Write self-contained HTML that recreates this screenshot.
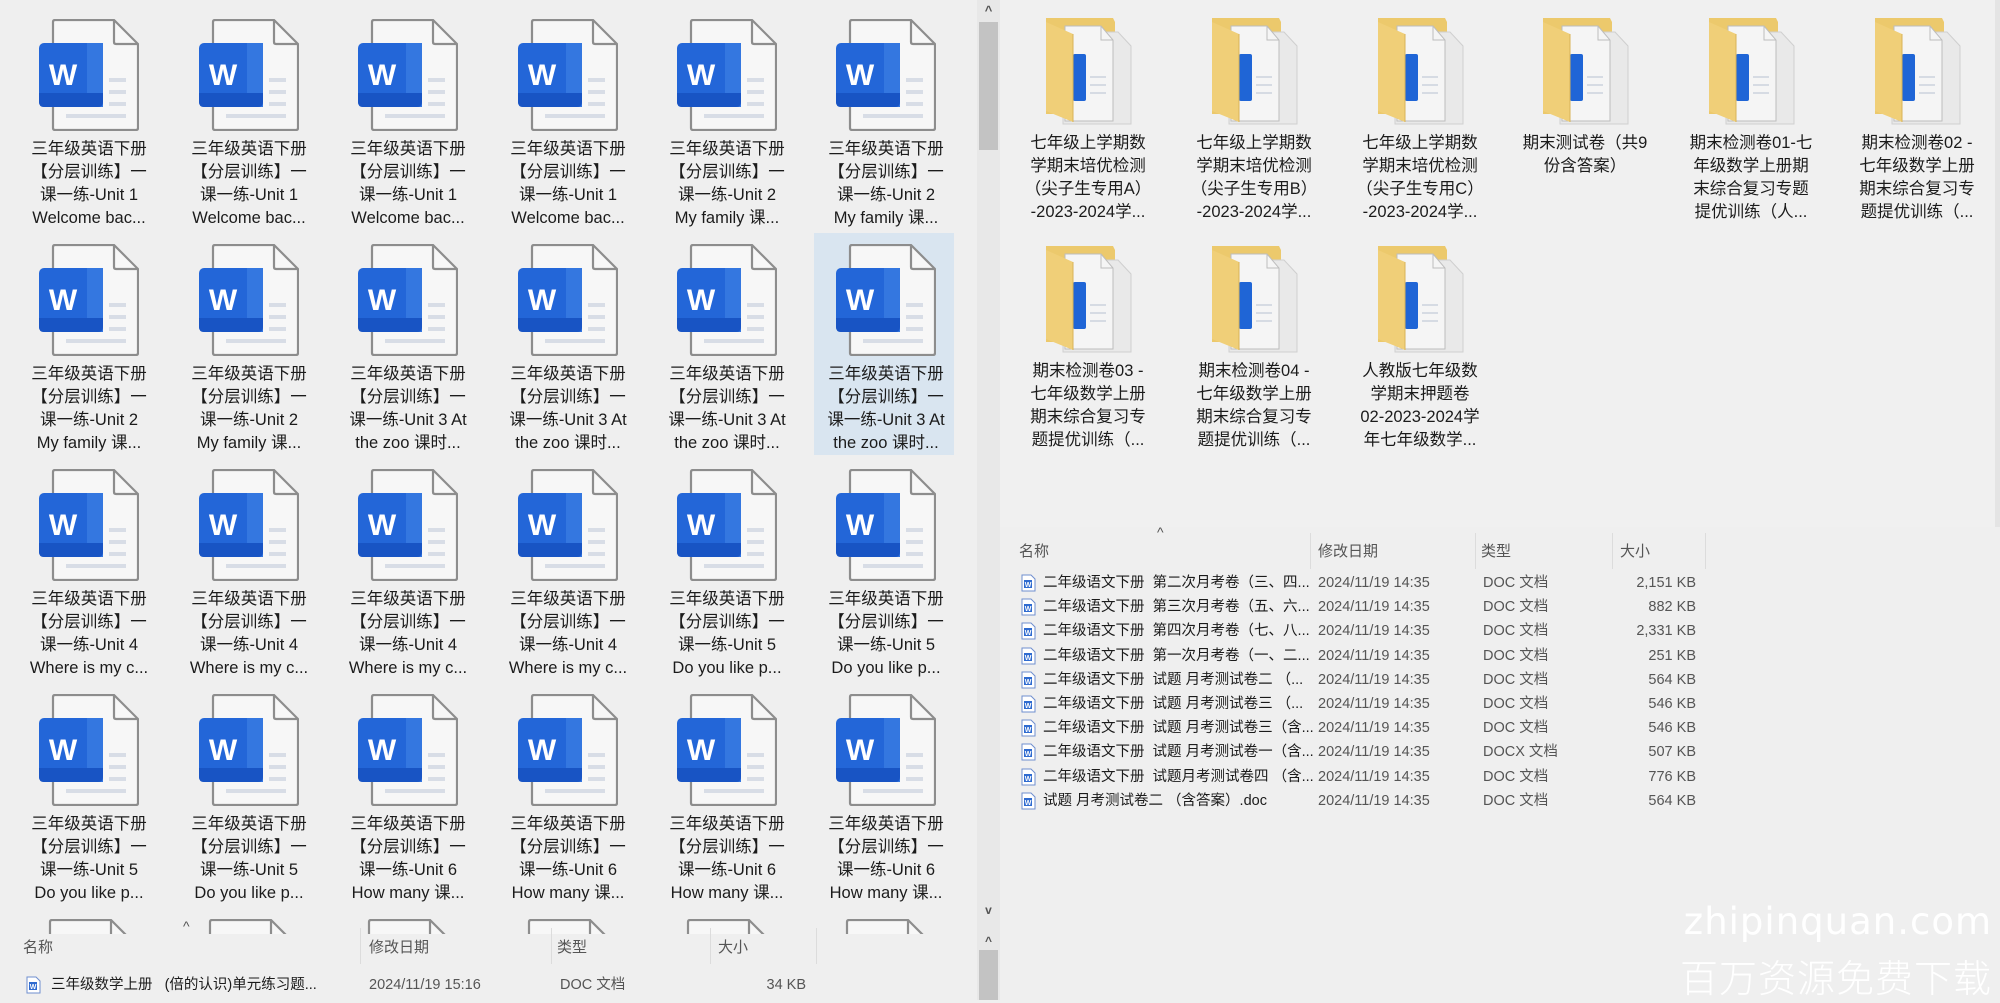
<!DOCTYPE html>
<html><head><meta charset="utf-8">
<style>
*{margin:0;padding:0;box-sizing:border-box}
html,body{width:2000px;height:1000px;overflow:hidden;background:#efefef;font-family:"Liberation Sans","Noto Sans CJK SC",sans-serif;color:#1b1b1b}
.it{position:absolute;width:150px;text-align:center}
.it svg{display:block;margin:0 auto}
.t{font-size:16.5px;line-height:23px;white-space:nowrap;margin-top:7px}
.sel{position:absolute;left:814px;top:233px;width:140px;height:222px;background:#d9e5f0}
.hdr{position:absolute;font-size:15px;color:#555}
.sep{position:absolute;width:1px;background:#dcdcdc}
.row{position:absolute;top:0;font-size:14.5px;line-height:18px;height:18px;color:#1b1b1b;white-space:nowrap}
.g{color:#555}
.wm{position:absolute;right:8px;color:#fff;text-align:right;white-space:nowrap}
</style></head><body>
<svg width="0" height="0" style="position:absolute">
<defs>
<symbol id="doc" viewBox="0 0 100 112">
<path d="M14 3 Q14 1 16 1 L75 1 L99 25 L99 109 Q99 111 97 111 L16 111 Q14 111 14 109 Z" fill="#f7f7f7" stroke="#8d8d8d" stroke-width="2.2"/>
<path d="M75 1 L75 23 Q75 25 77 25 L99 25" fill="none" stroke="#8d8d8d" stroke-width="2.2"/>
<rect x="70" y="59" width="17" height="4" fill="#d8dde6"/>
<rect x="70" y="71" width="17" height="4" fill="#d8dde6"/>
<rect x="70" y="83" width="17" height="4" fill="#d8dde6"/>
<rect x="27" y="95" width="60" height="4" fill="#d8dde6"/>
<rect x="0" y="24" width="64" height="64" rx="5" fill="#2366d8"/>
<rect x="48" y="24" width="16" height="64" fill="#3477e0"/>
<path d="M0 74 L64 74 L64 83 Q64 88 59 88 L5 88 Q0 88 0 83 Z" fill="#1854c4"/>
<text x="24" y="66" font-family="Liberation Sans,sans-serif" font-weight="bold" font-size="30" fill="#fff" text-anchor="middle">W</text>
</symbol>
<symbol id="fold" viewBox="0 0 90 115">
<path d="M3 4 L70 4 L72 8 L72 100 L3 100 Z" fill="#ecc96c"/>
<path d="M20 18 L75 18 L88 32 L88 110 L20 110 Z" fill="#e9e9e9" stroke="#cfcfcf"/>
<path d="M22 12 L58 12 L70 26 L70 107 L22 107 Z" fill="#f5f5f5" stroke="#bdbdbd"/>
<path d="M58 12 L58 26 L70 26" fill="none" stroke="#bdbdbd"/>
<rect x="30" y="40" width="13" height="47" rx="2" fill="#1f65d6"/>
<rect x="47" y="62" width="16" height="2" fill="#d6dbe3"/><rect x="47" y="70" width="16" height="2" fill="#d6dbe3"/><rect x="47" y="78" width="16" height="2" fill="#d6dbe3"/>
<path d="M3 8 L30 20 L30 108 L3 97 Z" fill="#f0cf78"/>
<path d="M30 20 L30 108" stroke="#d9b357" stroke-width="1"/>
</symbol>
<symbol id="sdoc" viewBox="0 0 16 18">
<path d="M2 1 L11 1 L15 5 L15 17 L2 17 Z" fill="#fff" stroke="#6f8fcf" stroke-width="1"/>
<rect x="4" y="6" width="8" height="8" fill="#2f6bd0"/>
<text x="8" y="13" font-size="7" font-family="Liberation Sans,sans-serif" fill="#fff" text-anchor="middle" font-weight="bold">W</text>
</symbol>
</defs></svg>

<div class="sel"></div>

<div class="it" style="left:14px;top:19px"><svg width="100" height="112"><use href="#doc"/></svg><div class="t">三年级英语下册<br>【分层训练】一<br>课一练-Unit 1<br>Welcome bac...</div></div>
<div class="it" style="left:174px;top:19px"><svg width="100" height="112"><use href="#doc"/></svg><div class="t">三年级英语下册<br>【分层训练】一<br>课一练-Unit 1<br>Welcome bac...</div></div>
<div class="it" style="left:333px;top:19px"><svg width="100" height="112"><use href="#doc"/></svg><div class="t">三年级英语下册<br>【分层训练】一<br>课一练-Unit 1<br>Welcome bac...</div></div>
<div class="it" style="left:493px;top:19px"><svg width="100" height="112"><use href="#doc"/></svg><div class="t">三年级英语下册<br>【分层训练】一<br>课一练-Unit 1<br>Welcome bac...</div></div>
<div class="it" style="left:652px;top:19px"><svg width="100" height="112"><use href="#doc"/></svg><div class="t">三年级英语下册<br>【分层训练】一<br>课一练-Unit 2<br>My family 课...</div></div>
<div class="it" style="left:811px;top:19px"><svg width="100" height="112"><use href="#doc"/></svg><div class="t">三年级英语下册<br>【分层训练】一<br>课一练-Unit 2<br>My family 课...</div></div>

<div class="it" style="left:14px;top:244px"><svg width="100" height="112"><use href="#doc"/></svg><div class="t">三年级英语下册<br>【分层训练】一<br>课一练-Unit 2<br>My family 课...</div></div>
<div class="it" style="left:174px;top:244px"><svg width="100" height="112"><use href="#doc"/></svg><div class="t">三年级英语下册<br>【分层训练】一<br>课一练-Unit 2<br>My family 课...</div></div>
<div class="it" style="left:333px;top:244px"><svg width="100" height="112"><use href="#doc"/></svg><div class="t">三年级英语下册<br>【分层训练】一<br>课一练-Unit 3 At<br>the zoo 课时...</div></div>
<div class="it" style="left:493px;top:244px"><svg width="100" height="112"><use href="#doc"/></svg><div class="t">三年级英语下册<br>【分层训练】一<br>课一练-Unit 3 At<br>the zoo 课时...</div></div>
<div class="it" style="left:652px;top:244px"><svg width="100" height="112"><use href="#doc"/></svg><div class="t">三年级英语下册<br>【分层训练】一<br>课一练-Unit 3 At<br>the zoo 课时...</div></div>
<div class="it" style="left:811px;top:244px"><svg width="100" height="112"><use href="#doc"/></svg><div class="t">三年级英语下册<br>【分层训练】一<br>课一练-Unit 3 At<br>the zoo 课时...</div></div>

<div class="it" style="left:14px;top:469px"><svg width="100" height="112"><use href="#doc"/></svg><div class="t">三年级英语下册<br>【分层训练】一<br>课一练-Unit 4<br>Where is my c...</div></div>
<div class="it" style="left:174px;top:469px"><svg width="100" height="112"><use href="#doc"/></svg><div class="t">三年级英语下册<br>【分层训练】一<br>课一练-Unit 4<br>Where is my c...</div></div>
<div class="it" style="left:333px;top:469px"><svg width="100" height="112"><use href="#doc"/></svg><div class="t">三年级英语下册<br>【分层训练】一<br>课一练-Unit 4<br>Where is my c...</div></div>
<div class="it" style="left:493px;top:469px"><svg width="100" height="112"><use href="#doc"/></svg><div class="t">三年级英语下册<br>【分层训练】一<br>课一练-Unit 4<br>Where is my c...</div></div>
<div class="it" style="left:652px;top:469px"><svg width="100" height="112"><use href="#doc"/></svg><div class="t">三年级英语下册<br>【分层训练】一<br>课一练-Unit 5<br>Do you like p...</div></div>
<div class="it" style="left:811px;top:469px"><svg width="100" height="112"><use href="#doc"/></svg><div class="t">三年级英语下册<br>【分层训练】一<br>课一练-Unit 5<br>Do you like p...</div></div>

<div class="it" style="left:14px;top:694px"><svg width="100" height="112"><use href="#doc"/></svg><div class="t">三年级英语下册<br>【分层训练】一<br>课一练-Unit 5<br>Do you like p...</div></div>
<div class="it" style="left:174px;top:694px"><svg width="100" height="112"><use href="#doc"/></svg><div class="t">三年级英语下册<br>【分层训练】一<br>课一练-Unit 5<br>Do you like p...</div></div>
<div class="it" style="left:333px;top:694px"><svg width="100" height="112"><use href="#doc"/></svg><div class="t">三年级英语下册<br>【分层训练】一<br>课一练-Unit 6<br>How many 课...</div></div>
<div class="it" style="left:493px;top:694px"><svg width="100" height="112"><use href="#doc"/></svg><div class="t">三年级英语下册<br>【分层训练】一<br>课一练-Unit 6<br>How many 课...</div></div>
<div class="it" style="left:652px;top:694px"><svg width="100" height="112"><use href="#doc"/></svg><div class="t">三年级英语下册<br>【分层训练】一<br>课一练-Unit 6<br>How many 课...</div></div>
<div class="it" style="left:811px;top:694px"><svg width="100" height="112"><use href="#doc"/></svg><div class="t">三年级英语下册<br>【分层训练】一<br>课一练-Unit 6<br>How many 课...</div></div>

<div style="position:absolute;left:0;top:919px;width:977px;height:15px;overflow:hidden">
<svg style="position:absolute;left:36px;top:0" width="100" height="112"><use href="#doc"/></svg>
<svg style="position:absolute;left:196px;top:0" width="100" height="112"><use href="#doc"/></svg>
<svg style="position:absolute;left:355px;top:0" width="100" height="112"><use href="#doc"/></svg>
<svg style="position:absolute;left:515px;top:0" width="100" height="112"><use href="#doc"/></svg>
<svg style="position:absolute;left:674px;top:0" width="100" height="112"><use href="#doc"/></svg>
<svg style="position:absolute;left:833px;top:0" width="100" height="112"><use href="#doc"/></svg>
</div>

<div style="position:absolute;left:0;top:934px;width:977px;height:66px;background:#efefef"></div>
<div class="hdr" style="left:183px;top:918px;font-size:14px">^</div>
<div class="hdr" style="left:23px;top:936px">名称</div>
<div class="hdr" style="left:369px;top:936px">修改日期</div>
<div class="hdr" style="left:557px;top:936px">类型</div>
<div class="hdr" style="left:718px;top:936px">大小</div>
<div class="sep" style="left:360px;top:928px;height:36px"></div>
<div class="sep" style="left:551px;top:928px;height:36px"></div>
<div class="sep" style="left:710px;top:928px;height:36px"></div>
<div class="sep" style="left:816px;top:928px;height:36px"></div>
<div style="position:absolute;left:25px;top:976px;width:800px;height:20px">
<svg style="position:absolute;left:0;top:0" width="16" height="18"><use href="#sdoc"/></svg>
<span class="row" style="left:26px">三年级数学上册&nbsp;&nbsp;&nbsp;(倍的认识)单元练习题...</span>
<span class="row g" style="left:344px">2024/11/19 15:16</span>
<span class="row g" style="left:535px">DOC 文档</span>
<span class="row g" style="left:735px;width:46px;text-align:right">34 KB</span>
</div>

<div style="position:absolute;left:977px;top:0;width:23px;height:1000px;background:#e8e8e8"></div>
<div style="position:absolute;left:979px;top:22px;width:19px;height:128px;background:#c3c3c3"></div>
<div style="position:absolute;left:977px;top:3px;width:23px;text-align:center;font-size:13px;color:#555;font-weight:bold">^</div>
<div style="position:absolute;left:977px;top:903px;width:23px;text-align:center;font-size:12px;color:#555;font-weight:bold">v</div>
<div style="position:absolute;left:977px;top:934px;width:23px;text-align:center;font-size:12px;color:#555;font-weight:bold">^</div>
<div style="position:absolute;left:979px;top:950px;width:19px;height:50px;background:#c3c3c3"></div>

<div style="position:absolute;left:1000px;top:0;width:1000px;height:527px;background:#f0f0f0"></div>
<div style="position:absolute;left:1995px;top:0;width:5px;height:527px;background:#e4e4e4"></div>

<div class="it" style="left:1013px;top:14px"><svg width="90" height="115"><use href="#fold"/></svg><div class="t" style="margin-top:3px">七年级上学期数<br>学期末培优检测<br>（尖子生专用A）<br>-2023-2024学...</div></div>
<div class="it" style="left:1179px;top:14px"><svg width="90" height="115"><use href="#fold"/></svg><div class="t" style="margin-top:3px">七年级上学期数<br>学期末培优检测<br>（尖子生专用B）<br>-2023-2024学...</div></div>
<div class="it" style="left:1345px;top:14px"><svg width="90" height="115"><use href="#fold"/></svg><div class="t" style="margin-top:3px">七年级上学期数<br>学期末培优检测<br>（尖子生专用C）<br>-2023-2024学...</div></div>
<div class="it" style="left:1510px;top:14px"><svg width="90" height="115"><use href="#fold"/></svg><div class="t" style="margin-top:3px">期末测试卷（共9<br>份含答案）</div></div>
<div class="it" style="left:1676px;top:14px"><svg width="90" height="115"><use href="#fold"/></svg><div class="t" style="margin-top:3px">期末检测卷01-七<br>年级数学上册期<br>末综合复习专题<br>提优训练（人...</div></div>
<div class="it" style="left:1842px;top:14px"><svg width="90" height="115"><use href="#fold"/></svg><div class="t" style="margin-top:3px">期末检测卷02 -<br>七年级数学上册<br>期末综合复习专<br>题提优训练（...</div></div>

<div class="it" style="left:1013px;top:242px"><svg width="90" height="115"><use href="#fold"/></svg><div class="t" style="margin-top:3px">期末检测卷03 -<br>七年级数学上册<br>期末综合复习专<br>题提优训练（...</div></div>
<div class="it" style="left:1179px;top:242px"><svg width="90" height="115"><use href="#fold"/></svg><div class="t" style="margin-top:3px">期末检测卷04 -<br>七年级数学上册<br>期末综合复习专<br>题提优训练（...</div></div>
<div class="it" style="left:1345px;top:242px"><svg width="90" height="115"><use href="#fold"/></svg><div class="t" style="margin-top:3px">人教版七年级数<br>学期末押题卷<br>02-2023-2024学<br>年七年级数学...</div></div>

<div class="hdr" style="left:1157px;top:524px;font-size:14px">^</div>
<div class="hdr" style="left:1019px;top:540px">名称</div>
<div class="hdr" style="left:1318px;top:540px">修改日期</div>
<div class="hdr" style="left:1481px;top:540px">类型</div>
<div class="hdr" style="left:1620px;top:540px">大小</div>
<div class="sep" style="left:1310px;top:533px;height:36px"></div>
<div class="sep" style="left:1475px;top:533px;height:36px"></div>
<div class="sep" style="left:1612px;top:533px;height:36px"></div>
<div class="sep" style="left:1705px;top:533px;height:36px"></div>

<div style="position:absolute;left:1020px;top:574px">
<div style="position:relative;height:24.2px;width:700px"><svg style="position:absolute;left:0;top:0" width="16" height="18"><use href="#sdoc"/></svg><span class="row" style="left:23px">二年级语文下册&nbsp;&nbsp;第二次月考卷（三、四...</span><span class="row g" style="left:298px">2024/11/19 14:35</span><span class="row g" style="left:463px">DOC 文档</span><span class="row g" style="left:596px;width:80px;text-align:right">2,151 KB</span></div>
<div style="position:relative;height:24.2px;width:700px"><svg style="position:absolute;left:0;top:0" width="16" height="18"><use href="#sdoc"/></svg><span class="row" style="left:23px">二年级语文下册&nbsp;&nbsp;第三次月考卷（五、六...</span><span class="row g" style="left:298px">2024/11/19 14:35</span><span class="row g" style="left:463px">DOC 文档</span><span class="row g" style="left:596px;width:80px;text-align:right">882 KB</span></div>
<div style="position:relative;height:24.2px;width:700px"><svg style="position:absolute;left:0;top:0" width="16" height="18"><use href="#sdoc"/></svg><span class="row" style="left:23px">二年级语文下册&nbsp;&nbsp;第四次月考卷（七、八...</span><span class="row g" style="left:298px">2024/11/19 14:35</span><span class="row g" style="left:463px">DOC 文档</span><span class="row g" style="left:596px;width:80px;text-align:right">2,331 KB</span></div>
<div style="position:relative;height:24.2px;width:700px"><svg style="position:absolute;left:0;top:0" width="16" height="18"><use href="#sdoc"/></svg><span class="row" style="left:23px">二年级语文下册&nbsp;&nbsp;第一次月考卷（一、二...</span><span class="row g" style="left:298px">2024/11/19 14:35</span><span class="row g" style="left:463px">DOC 文档</span><span class="row g" style="left:596px;width:80px;text-align:right">251 KB</span></div>
<div style="position:relative;height:24.2px;width:700px"><svg style="position:absolute;left:0;top:0" width="16" height="18"><use href="#sdoc"/></svg><span class="row" style="left:23px">二年级语文下册&nbsp;&nbsp;试题 月考测试卷二 （...</span><span class="row g" style="left:298px">2024/11/19 14:35</span><span class="row g" style="left:463px">DOC 文档</span><span class="row g" style="left:596px;width:80px;text-align:right">564 KB</span></div>
<div style="position:relative;height:24.2px;width:700px"><svg style="position:absolute;left:0;top:0" width="16" height="18"><use href="#sdoc"/></svg><span class="row" style="left:23px">二年级语文下册&nbsp;&nbsp;试题 月考测试卷三 （...</span><span class="row g" style="left:298px">2024/11/19 14:35</span><span class="row g" style="left:463px">DOC 文档</span><span class="row g" style="left:596px;width:80px;text-align:right">546 KB</span></div>
<div style="position:relative;height:24.2px;width:700px"><svg style="position:absolute;left:0;top:0" width="16" height="18"><use href="#sdoc"/></svg><span class="row" style="left:23px">二年级语文下册&nbsp;&nbsp;试题 月考测试卷三（含...</span><span class="row g" style="left:298px">2024/11/19 14:35</span><span class="row g" style="left:463px">DOC 文档</span><span class="row g" style="left:596px;width:80px;text-align:right">546 KB</span></div>
<div style="position:relative;height:24.2px;width:700px"><svg style="position:absolute;left:0;top:0" width="16" height="18"><use href="#sdoc"/></svg><span class="row" style="left:23px">二年级语文下册&nbsp;&nbsp;试题 月考测试卷一（含...</span><span class="row g" style="left:298px">2024/11/19 14:35</span><span class="row g" style="left:463px">DOCX 文档</span><span class="row g" style="left:596px;width:80px;text-align:right">507 KB</span></div>
<div style="position:relative;height:24.2px;width:700px"><svg style="position:absolute;left:0;top:0" width="16" height="18"><use href="#sdoc"/></svg><span class="row" style="left:23px">二年级语文下册&nbsp;&nbsp;试题月考测试卷四 （含...</span><span class="row g" style="left:298px">2024/11/19 14:35</span><span class="row g" style="left:463px">DOC 文档</span><span class="row g" style="left:596px;width:80px;text-align:right">776 KB</span></div>
<div style="position:relative;height:24.2px;width:700px"><svg style="position:absolute;left:0;top:0" width="16" height="18"><use href="#sdoc"/></svg><span class="row" style="left:23px">试题 月考测试卷二 （含答案）.doc</span><span class="row g" style="left:298px">2024/11/19 14:35</span><span class="row g" style="left:463px">DOC 文档</span><span class="row g" style="left:596px;width:80px;text-align:right">564 KB</span></div>
</div>

<div class="wm" style="top:900px;font-size:37px;font-family:'DejaVu Sans',sans-serif;letter-spacing:1px">zhipinquan.com</div>
<div class="wm" style="top:948px;font-size:38px;font-family:'Noto Sans CJK SC',sans-serif;font-weight:300;letter-spacing:1px">百万资源免费下载</div>
</body></html>
